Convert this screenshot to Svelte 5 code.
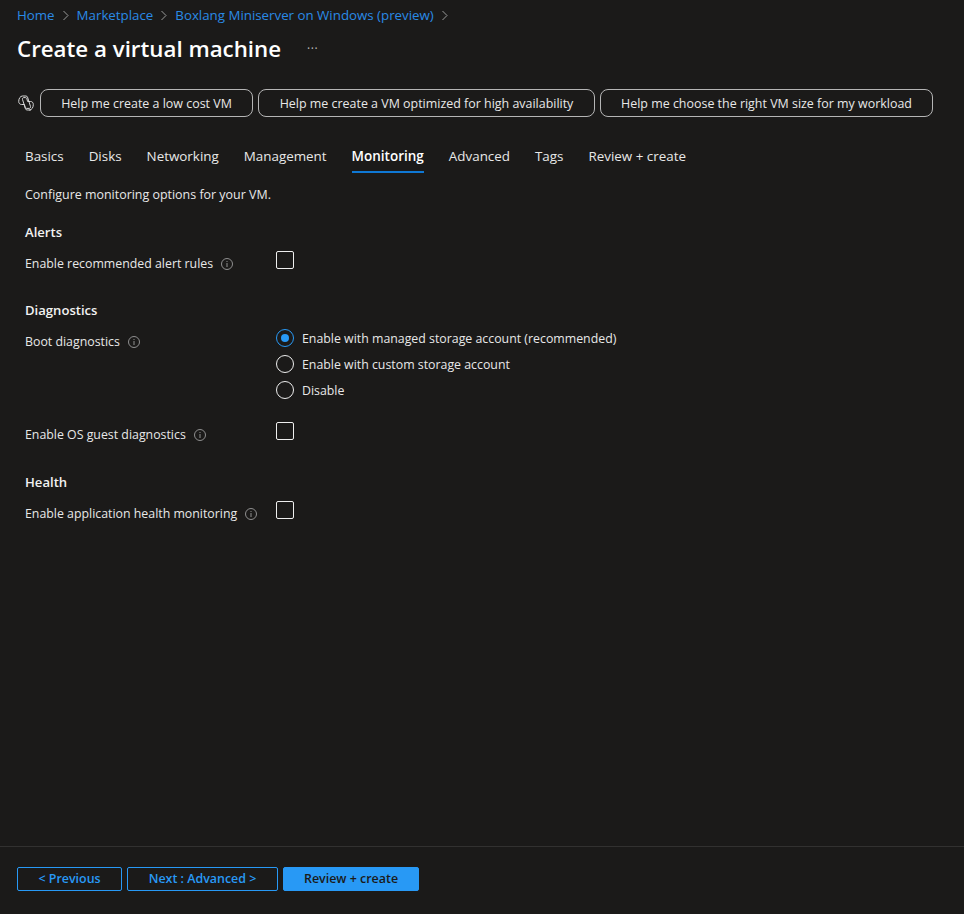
<script>
  const crumbs = ["Home", "Marketplace", "Boxlang Miniserver on Windows (preview)"];
  const prompts = [
    "Help me create a low cost VM",
    "Help me create a VM optimized for high availability",
    "Help me choose the right VM size for my workload"
  ];
  const tabs = ["Basics", "Disks", "Networking", "Management", "Monitoring", "Advanced", "Tags", "Review + create"];
  const bootOptions = [
    "Enable with managed storage account (recommended)",
    "Enable with custom storage account",
    "Disable"
  ];
</script>

{#snippet info()}
  <svg class="info" width="12" height="12" viewBox="0 0 12 12" fill="none">
    <circle cx="6" cy="6" r="5.5" stroke="#8f8f8f" />
    <rect x="5.5" y="5" width="1" height="4" fill="#8f8f8f" />
    <rect x="5.5" y="3" width="1" height="1" fill="#8f8f8f" />
  </svg>
{/snippet}

<div class="page">
  <main>
    <nav class="crumbs">
      {#each crumbs as crumb}
        <span class="crumb">{crumb}</span>
        <svg width="6" height="11" viewBox="0 0 6 11" fill="none">
          <path d="M.5 1l4.500 4.500L.5 10" stroke="#9a9a9a" />
        </svg>
      {/each}
    </nav>

    <header class="title">
      <h1>Create a virtual machine</h1>
      <span class="more">···</span>
    </header>

    <div class="prompts">
      <svg class="copilot" width="17" height="16" viewBox="0 0 17 16" fill="none" stroke="#d8d8d8" stroke-width="1">
        <path d="M4.500 1h3.400c.8 0 1.300.4 1.600 1.100l3 9.400c.3 1-.3 1.900-1.300 1.900H8.600c-.7 0-1.200-.4-1.400-1L6.400 9.500H3.600C2 9.500 .7 8.300 .7 6.500 .7 3.500 2.300 1 4.500 1z" />
        <path d="M12.500 15H9.100c-.8 0-1.300-.4-1.600-1.100l-3-9.400c-.3-1 .3-1.900 1.300-1.900h1.600c.7 0 1.200.4 1.400 1l.8 2.900h3c1.600 0 2.700 1.200 2.700 3 0 3-1.600 5.500-3.800 5.500z" />
      </svg>
      {#each prompts as prompt}
        <button class="prompt">{prompt}</button>
      {/each}
    </div>

    <div class="tabs">
      {#each tabs as tab}
        <span class="tab" class:active={tab === "Monitoring"}>{tab}</span>
      {/each}
    </div>

    <p class="intro">Configure monitoring options for your VM.</p>

    <section class="alerts">
      <h2>Alerts</h2>
      <div class="row">
        <div class="label">Enable recommended alert rules {@render info()}</div>
        <span class="check"></span>
      </div>
    </section>

    <section class="diagnostics">
      <h2>Diagnostics</h2>
      <div class="row">
        <div class="label">Boot diagnostics {@render info()}</div>
        <div class="radios">
          {#each bootOptions as option, i}
            <div class="radio-row">
              <span class="radio" class:on={i === 0}></span>
              <span>{option}</span>
            </div>
          {/each}
        </div>
      </div>
      <div class="row guest">
        <div class="label">Enable OS guest diagnostics {@render info()}</div>
        <span class="check"></span>
      </div>
    </section>

    <section class="health">
      <h2>Health</h2>
      <div class="row">
        <div class="label">Enable application health monitoring {@render info()}</div>
        <span class="check"></span>
      </div>
    </section>
  </main>

  <footer>
    <button class="outline prev">&lt; Previous</button>
    <button class="outline next">Next : Advanced &gt;</button>
    <button class="primary">Review + create</button>
  </footer>
</div>

<style>
  :global(body) {
    background: #1b1a19;
  }
  .page {
    height: 914px;
    display: flex;
    flex-direction: column;
    background: #1b1a19;
    color: #e8e8e8;
    font-family: "Open Sans", "Noto Sans", sans-serif;
    font-size: 12.45px;
    overflow: hidden;
  }
  main {
    flex: 1;
  }
  .crumbs {
    display: flex;
    align-items: center;
    height: 20px;
    padding: 5px 0 0 17px;
    gap: 8px;
    font-size: 13.3px;
  }
  .crumb {
    color: #2a8ae6;
  }
  .title {
    display: flex;
    align-items: center;
    margin: 8px 0 0 17px;
    height: 30px;
  }
  h1 {
    margin: 0;
    font-size: 22.3px;
    font-weight: 600;
    color: #fff;
  }
  .more {
    margin-left: 26px;
    color: #bbb;
    font-size: 12px;
    letter-spacing: 0.5px;
  }
  .prompts {
    display: flex;
    align-items: center;
    margin: 26px 0 0 18px;
    gap: 5px;
  }
  .prompt {
    width: 333px;
    height: 28px;
    padding: 0;
    border: 1px solid #b5b5b5;
    border-radius: 8px;
    background: none;
    color: #e8e8e8;
    font: inherit;
  }
  .prompt:nth-of-type(1) {
    width: 213px;
  }
  .prompt:nth-of-type(2) {
    width: 337px;
  }
  .tabs {
    display: flex;
    margin: 25px 0 0 25px;
    gap: 25px;
    height: 30px;
    font-size: 13.4px;
  }
  .tab {
    height: 31px;
    line-height: 28px;
    box-sizing: border-box;
  }
  .tab.active {
    font-size: 13.5px;
    font-weight: 600;
    color: #fff;
    border-bottom: 2px solid #0f78d4;
  }
  .intro {
    margin: 14px 0 0 25px;
    line-height: 18px;
  }
  section {
    margin-left: 25px;
    font-size: 12.35px;
  }
  h2 {
    margin: 0;
    font-size: 13.1px;
    font-weight: 600;
    line-height: 18px;
    color: #f2f2f2;
  }
  .alerts {
    margin-top: 19px;
  }
  .diagnostics {
    margin-top: 28px;
  }
  .health {
    margin-top: 29px;
  }
  .row {
    display: flex;
    align-items: flex-start;
    margin-top: 10px;
  }
  .guest {
    margin-top: 23px;
  }
  .label {
    width: 251px;
    flex: none;
    line-height: 18px;
    padding-top: 4px;
  }
  .info {
    margin-left: 5px;
    vertical-align: -2px;
  }
  .check {
    width: 18px;
    height: 18px;
    box-sizing: border-box;
    border: 1px solid #eee;
    border-radius: 2px;
  }
  .radios {
    display: flex;
    flex-direction: column;
    gap: 8px;
  }
  .radio-row {
    display: flex;
    align-items: center;
    gap: 8px;
    height: 18px;
  }
  .radio {
    width: 18px;
    height: 18px;
    box-sizing: border-box;
    border: 1px solid #eee;
    border-radius: 50%;
    display: flex;
    align-items: center;
    justify-content: center;
  }
  .radio.on {
    border-color: #2899f5;
  }
  .radio.on::after {
    content: "";
    width: 8px;
    height: 8px;
    border-radius: 50%;
    background: #2899f5;
  }
  footer {
    height: 68px;
    box-sizing: border-box;
    border-top: 1px solid #323130;
    padding: 20px 0 0 17px;
    display: flex;
    align-items: flex-start;
    gap: 5px;
  }
  footer button {
    height: 24px;
    border-radius: 2px;
    font: inherit;
    font-weight: 600;
    padding: 0 0 2px;
  }
  .outline {
    background: none;
    border: 1px solid #2899f5;
    color: #2899f5;
  }
  .prev {
    width: 105px;
  }
  .next {
    width: 151px;
  }
  .primary {
    width: 136px;
    background: #2899f5;
    border: 1px solid #2899f5;
    color: #1b1a19;
  }
</style>
